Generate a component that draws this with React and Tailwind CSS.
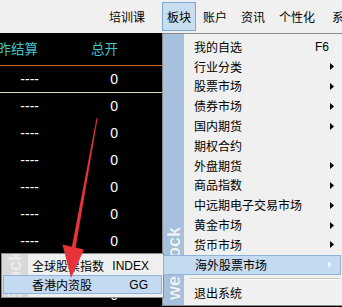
const MENU_ITEMS = [
  { label: '我的自选', key: 'F6' },
  { label: '行业分类', sub: true },
  { label: '股票市场', sub: true },
  { label: '债券市场', sub: true },
  { label: '国内期货', sub: true },
  { label: '期权合约' },
  { label: '外盘期货', sub: true },
  { label: '商品指数', sub: true },
  { label: '中远期电子交易市场', sub: true },
  { label: '黄金市场', sub: true },
  { label: '货币市场', sub: true },
  { label: '海外股票市场', sub: true, active: true },
  { sep: true },
  { label: '退出系统' },
];

const ROWS = 9;

function Caret({ light }) {
  return (
    <svg width="4" height="7" viewBox="0 0 4 7" className="shrink-0">
      <path d="M0 0L4 3.5L0 7Z" fill={light ? '#eef4fb' : '#000000'} />
    </svg>
  );
}

function MenuRow({ item }) {
  if (item.sep) {
    return (
      <div className="flex h-[9px] flex-col justify-center ml-[6px] mr-[2px]">
        <div className="h-px bg-[#c6c6c6]" />
        <div className="h-px bg-white" />
      </div>
    );
  }
  const base = 'flex h-[19.8px] items-center pr-[8px]';
  const cls = item.active
    ? `${base} relative z-10 -ml-[21px] mr-[1px] pl-[31px] border border-[#8fb3da] bg-[#c4daf1]`
    : `${base} pl-[10px]`;
  return (
    <div className={cls}>
      <span className="flex-1 whitespace-nowrap">{item.label}</span>
      {item.key && <span className="pr-[5px] font-['Liberation_Sans',sans-serif]">{item.key}</span>}
      {item.sub && <Caret light={item.active} />}
    </div>
  );
}

export default function App() {
  return (
    <div className="relative h-[307px] w-[342px] overflow-hidden bg-black font-['Noto_Sans_CJK_SC','Liberation_Sans',sans-serif] text-[12px] leading-none">
      {/* menu bar */}
      <div className="flex h-[33px] items-center bg-[#f0f0f0] pl-[102px] text-black whitespace-nowrap">
        <span className="px-[7px]">培训课</span>
        <span className="ml-[10px] flex h-[29px] items-center border border-[#7ea6d3] bg-[#c9ddf1] px-[4px]">板块</span>
        <span className="px-[7px]">账户</span>
        <span className="px-[7px]">资讯</span>
        <span className="px-[7px]">个性化</span>
        <span className="px-[10px]">系统</span>
      </div>

      {/* quote table */}
      <div className="w-[162px]">
        <div className="flex h-[33px] items-center border-b border-[#cc6a26] text-[13.5px] text-[#3ec4c4]">
          <div className="flex w-[38px] justify-end whitespace-nowrap">昨结算</div>
          <div className="flex w-[80px] justify-end whitespace-nowrap">总开</div>
        </div>
        {Array.from({ length: ROWS }).map((_, i) => (
          <div
            key={i}
            className={`flex items-center pb-[1px] font-['Liberation_Sans',sans-serif] text-[14px] text-white ${
              i === 0 ? 'h-[27px] border-b border-[#e2dcae]' : 'h-[27px]'
            }`}
          >
            <div className="flex w-[39px] justify-end">----</div>
            <div className="flex w-[79px] justify-end">0</div>
          </div>
        ))}
      </div>

      {/* dropdown of 板块 */}
      <div className="absolute left-[162px] top-[33px] flex h-[273px] w-[181px] border border-[#8a8a8a] bg-[#f0f0f0] text-black">
        <div className="flex w-[21px] shrink-0 flex-col items-center justify-end bg-[#a7c1dc] pb-[5px]">
          <span className="rotate-180 font-['Liberation_Sans',sans-serif] text-[18px] font-bold text-[#eef3f8] [writing-mode:vertical-rl] [text-shadow:0_0_1px_#7b93ae]">
            weStock
          </span>
        </div>
        <div className="flex flex-1 flex-col pt-[3px]">
          {MENU_ITEMS.map((item, i) => (
            <MenuRow key={i} item={item} />
          ))}
        </div>
      </div>

      {/* sub menu */}
      <div className="absolute left-[1px] top-[253px] flex h-[45px] w-[163px] overflow-hidden border border-[#8a8a8a] bg-[#f0f0f0] text-black">
        <div className="flex w-[26px] shrink-0 items-center justify-center overflow-hidden bg-[#d9d9d9]">
          <span className="rotate-180 font-['Liberation_Sans',sans-serif] text-[18px] font-bold text-[#ececec] [writing-mode:vertical-rl]">
            Stock
          </span>
        </div>
        <div className="flex flex-1 flex-col pt-[2px]">
          <div className="flex h-[19px] items-center pl-[4px] pr-[14px]">
            <span className="flex-1">全球股票指数</span>
            <span className="font-['Liberation_Sans',sans-serif]">INDEX</span>
          </div>
          <div className="relative z-10 -ml-[25px] mr-[1px] flex h-[19px] items-center border border-[#8fb3da] bg-[#c4daf1] pl-[28px] pr-[13px]">
            <span className="flex-1">香港内资股</span>
            <span className="font-['Liberation_Sans',sans-serif]">GG</span>
          </div>
        </div>
      </div>

      {/* red annotation arrow */}
      <svg className="pointer-events-none absolute left-0 top-0 z-20" width="342" height="307" viewBox="0 0 342 307">
        <path d="M96.6 118 L97.6 118 L75.6 248 L71.6 248 Z" fill="#e8323a" />
        <path d="M62.5 244.5 L84 249.5 L71 278 Z" fill="#e8323a" />
      </svg>
    </div>
  );
}
